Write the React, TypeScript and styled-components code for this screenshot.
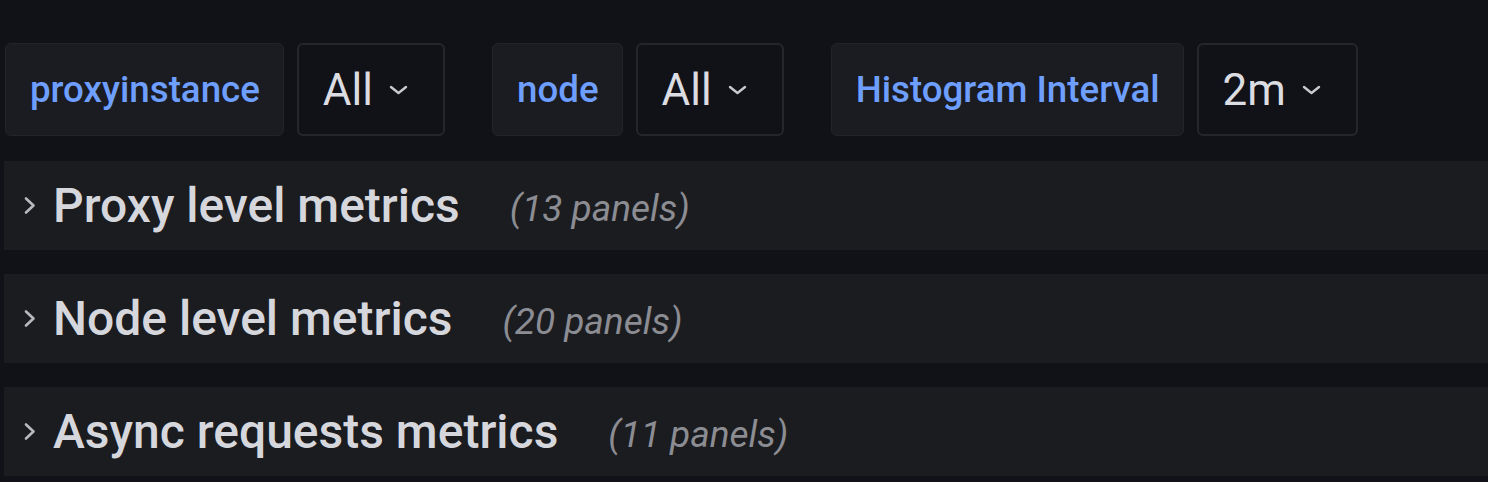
import React from "react";
import styled, { createGlobalStyle } from "styled-components";

const Global = createGlobalStyle`
  html, body { margin: 0; padding: 0; background: #111217; }
  body { font-family: Roboto, "Liberation Sans", sans-serif; overflow: hidden; }
`;

const Page = styled.div`
  width: 1488px;
  height: 482px;
  background: #111217;
  padding: 43px 0 0 5px;
  box-sizing: border-box;
  display: flex;
  flex-direction: column;
`;

const Toolbar = styled.div`
  display: flex;
  align-items: stretch;
  gap: 47px;
  height: 93px;
`;

const VarGroup = styled.div`
  display: flex;
  gap: 13px;
`;

const Label = styled.div`
  display: flex;
  align-items: center;
  padding: 0 23px 0 24px;
  background: #1b1c21;
  border: 1px solid #22242a;
  border-radius: 6px;
  color: #6e9fff;
  font-size: 36.7px;
  font-weight: 500;
`;

const Picker = styled.div`
  display: flex;
  align-items: center;
  padding: 0 35px 0 24px;
  background: #111217;
  border: 2px solid #25262c;
  border-radius: 6px;
  color: #dcdde2;
  font-size: 44px;
  font-weight: 400;
  gap: 16px;
`;

const Rows = styled.div`
  display: flex;
  flex-direction: column;
  gap: 24px;
  margin-top: 25px;
  margin-left: -1px;
`;

const Row = styled.div`
  display: flex;
  align-items: center;
  height: 89px;
  background: #1b1c20;
  padding-left: 19px;
`;

const Title = styled.span`
  color: #d6d7dd;
  font-size: 48px;
  font-weight: 500;
  margin-left: 16px;
`;

const Count = styled.span`
  color: #8c8d93;
  font-size: 37px;
  font-style: italic;
  margin-left: 50px;
  margin-top: 6px;
`;

const Chevron = () => (
  <svg width="19" height="10" viewBox="0 0 19 10" fill="none">
    <path d="M2 2 L9.5 8 L17 2" stroke="#c8c9cf" strokeWidth="2.4" strokeLinecap="round" strokeLinejoin="round" />
  </svg>
);

const RowChevron = () => (
  <svg width="14" height="19" viewBox="0 0 14 19" fill="none">
    <path d="M3 2.5 L10.5 9.5 L3 16.5" stroke="#b8b9bf" strokeWidth="2.6" strokeLinecap="round" strokeLinejoin="round" />
  </svg>
);

const vars = [
  { label: "proxyinstance", value: "All" },
  { label: "node", value: "All" },
  { label: "Histogram Interval", value: "2m" },
];

const rows = [
  { title: "Proxy level metrics", count: 13 },
  { title: "Node level metrics", count: 20 },
  { title: "Async requests metrics", count: 11 },
];

export default function App() {
  return (
    <>
      <Global />
      <Page>
        <Toolbar>
          {vars.map((v) => (
            <VarGroup key={v.label}>
              <Label>{v.label}</Label>
              <Picker>
                <span>{v.value}</span>
                <Chevron />
              </Picker>
            </VarGroup>
          ))}
        </Toolbar>
        <Rows>
          {rows.map((r) => (
            <Row key={r.title}>
              <RowChevron />
              <Title>{r.title}</Title>
              <Count>({r.count} panels)</Count>
            </Row>
          ))}
        </Rows>
      </Page>
    </>
  );
}
